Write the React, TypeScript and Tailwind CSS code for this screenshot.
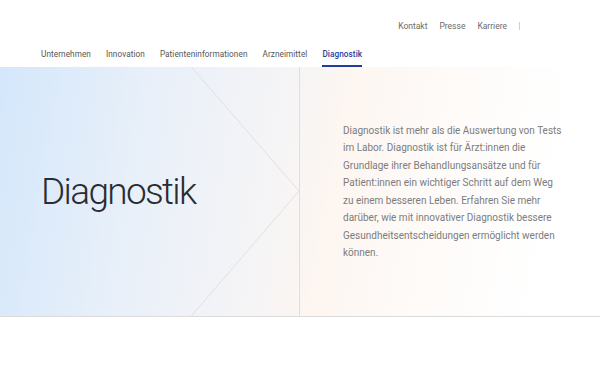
import React from 'react';

const navItems = ['Unternehmen', 'Innovation', 'Patienteninformationen', 'Arzneimittel', 'Diagnostik'];

export default function App() {
  return (
    <div className="min-h-[375px] bg-white" style={{ fontFamily: 'Roboto, "Noto Sans", sans-serif' }}>
      {/* utility links */}
      <div className="flex h-[46px] items-center justify-end pr-[80px] pt-[6px]">
        <div className="flex items-center gap-[12px] text-[8.5px] text-[#6b6b6b]">
          <span>Kontakt</span>
          <span>Presse</span>
          <span>Karriere</span>
          <span className="h-[8px] w-px bg-[#cfcfcf]" />
        </div>
      </div>

      {/* main nav */}
      <nav className="flex h-[21px] items-stretch gap-[15px] pl-[41px] text-[8.2px] tracking-[0.01em]">
        {navItems.map((item) => (
          <div
            key={item}
            className={`flex items-center border-b-2 pb-[2px] ${
              item === 'Diagnostik' ? 'border-[#1f3f9c] font-medium text-[#1f3f9c]' : 'border-transparent text-[#555]'
            }`}
          >
            {item}
          </div>
        ))}
      </nav>

      {/* hero */}
      <section className="relative grid h-[250px] grid-cols-[300px_1fr] border-b border-[#dcdcdc] bg-[linear-gradient(100deg,#d4e7fb_0%,#e9f0f9_25%,#f5f4f6_45%,#fdf6f1_55%,#fefbf9_72%,#ffffff_90%)]">
        <div className="relative flex items-center border-r border-[#dedede] pl-[41px]">
          <svg className="absolute inset-0 h-full w-full" viewBox="0 0 300 249" preserveAspectRatio="none">
            <polyline points="192,0 300,124 192,249" fill="none" stroke="#dcdcdc" strokeWidth="0.8" />
          </svg>
          <h1 className="relative text-[37px] font-light leading-none tracking-[-0.045em] text-[#2a2b33]">
            Diagnostik
          </h1>
        </div>
        <div className="flex items-center pl-[43px]">
          <p className="w-[222px] text-[10px] leading-[17.5px] text-[#7c7c7c]">
            Diagnostik ist mehr als die Auswertung von Tests im Labor. Diagnostik ist für Ärzt:innen die Grundlage
            ihrer Behandlungsansätze und für Patient:innen ein wichtiger Schritt auf dem Weg zu einem besseren Leben.
            Erfahren Sie mehr darüber, wie mit innovativer Diagnostik bessere Gesundheitsentscheidungen ermöglicht
            werden können.
          </p>
        </div>
      </section>
    </div>
  );
}
